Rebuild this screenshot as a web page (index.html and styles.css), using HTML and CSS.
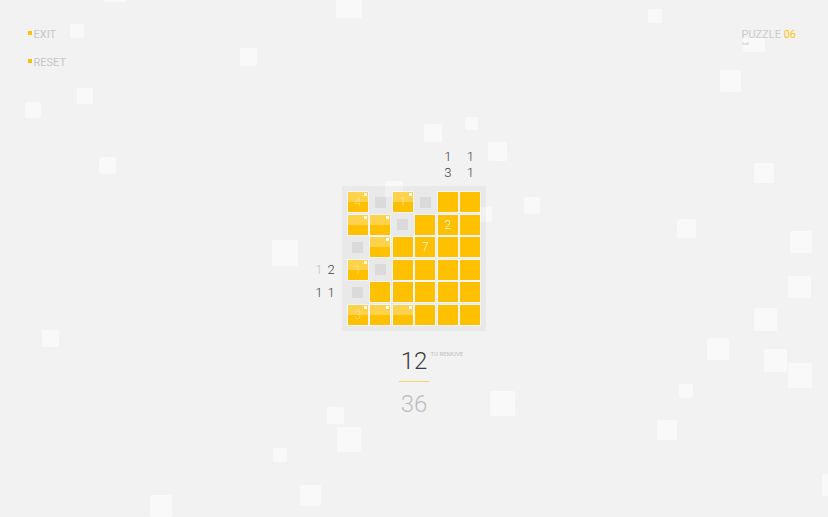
FILE: index.html
```html
<!DOCTYPE html>
<html lang="en">
<head>
<meta charset="utf-8">
<title>Puzzle 06</title>
<link rel="stylesheet" href="styles.css">
</head>
<body>
<div class="bg" aria-hidden="true">
  <i class="sq"></i><i class="sq"></i><i class="sq"></i><i class="sq"></i><i class="sq"></i>
  <i class="sq"></i><i class="sq"></i><i class="sq"></i><i class="sq"></i><i class="sq"></i>
  <i class="sq"></i><i class="sq"></i><i class="sq"></i><i class="sq"></i><i class="sq"></i>
  <i class="sq"></i><i class="sq"></i><i class="sq"></i><i class="sq"></i><i class="sq"></i>
  <i class="sq"></i><i class="sq"></i><i class="sq"></i><i class="sq"></i><i class="sq"></i>
  <i class="sq"></i><i class="sq"></i><i class="sq"></i><i class="sq"></i><i class="sq"></i>
  <i class="sq"></i><i class="sq"></i><i class="sq"></i><i class="sq"></i><i class="sq"></i>
</div>

<header class="top">
  <nav class="menu">
    <a class="item"><span class="mark"></span>EXIT</a>
    <a class="item"><span class="mark"></span>RESET</a>
  </nav>
  <div class="puzzle">
    <div class="title">PUZZLE <span class="num">06</span></div>
    <div class="size">6x6</div>
  </div>
</header>

<main class="game">
  <div class="spacer"></div>
  <div class="cols">
    <div class="col"></div>
    <div class="col"></div>
    <div class="col"></div>
    <div class="col"></div>
    <div class="col"><span>1</span><span>3</span></div>
    <div class="col"><span>1</span><span>1</span></div>
  </div>
  <div class="spacer"></div>

  <div class="rows">
    <div class="row"></div>
    <div class="row"></div>
    <div class="row"></div>
    <div class="row"><span class="done">1</span><span>2</span></div>
    <div class="row"><span>1</span><span>1</span></div>
    <div class="row"></div>
  </div>
  <div class="board">
    <div class="cell flag"><span class="n">4</span></div>
    <div class="cell empty"></div>
    <div class="cell flag"><span class="n">1</span></div>
    <div class="cell empty"></div>
    <div class="cell full"></div>
    <div class="cell full"></div>

    <div class="cell flag"></div>
    <div class="cell flag"></div>
    <div class="cell empty"></div>
    <div class="cell full"></div>
    <div class="cell full"><span class="n">2</span></div>
    <div class="cell full"></div>

    <div class="cell empty"></div>
    <div class="cell flag"></div>
    <div class="cell full"></div>
    <div class="cell full"><span class="n">7</span></div>
    <div class="cell full"></div>
    <div class="cell full"></div>

    <div class="cell flag"><span class="n">1</span></div>
    <div class="cell empty"></div>
    <div class="cell full"></div>
    <div class="cell full"></div>
    <div class="cell full"></div>
    <div class="cell full"></div>

    <div class="cell empty"></div>
    <div class="cell full"></div>
    <div class="cell full"></div>
    <div class="cell full"></div>
    <div class="cell full"></div>
    <div class="cell full"></div>

    <div class="cell flag"><span class="n">3</span></div>
    <div class="cell flag"></div>
    <div class="cell flag"></div>
    <div class="cell full"></div>
    <div class="cell full"></div>
    <div class="cell full"></div>
  </div>
  <div class="spacer"></div>
</main>

<section class="counter">
  <div class="spacer"></div>
  <div class="remain">12</div>
  <div class="label">TO REMOVE</div>
  <div class="line"></div>
  <div class="total">36</div>
</section>
</body>
</html>
```

FILE: styles.css
```css
* { box-sizing: border-box; }

html, body {
  margin: 0;
  padding: 0;
}

body {
  position: relative;
  width: 828px;
  height: 517px;
  overflow: hidden;
  background: #f2f2f2;
  font-family: Roboto, "Liberation Sans", sans-serif;
}

/* decorative background squares */
.bg {
  position: absolute;
  inset: 0;
  z-index: 0;
}
.sq {
  position: absolute;
  display: block;
  background: #f9f9f9;
  border-radius: 2px;
}
.sq:nth-child(1)  { left: 336px; top: -8px;  width: 26px; height: 26px; }
.sq:nth-child(2)  { left: 103px; top: -20px; width: 23px; height: 22px; }
.sq:nth-child(3)  { left: 70px;  top: 24px;  width: 14px; height: 14px; }
.sq:nth-child(4)  { left: 240px; top: 48px;  width: 17px; height: 18px; }
.sq:nth-child(5)  { left: 77px;  top: 88px;  width: 16px; height: 16px; }
.sq:nth-child(6)  { left: 25px;  top: 102px; width: 16px; height: 16px; }
.sq:nth-child(7)  { left: 648px; top: 9px;   width: 14px; height: 14px; }
.sq:nth-child(8)  { left: 743px; top: 38px;  width: 22px; height: 14px; }
.sq:nth-child(9)  { left: 720px; top: 70px;  width: 21px; height: 22px; }
.sq:nth-child(10) { left: 424px; top: 124px; width: 18px; height: 18px; }
.sq:nth-child(11) { left: 465px; top: 117px; width: 13px; height: 13px; }
.sq:nth-child(12) { left: 488px; top: 142px; width: 19px; height: 19px; }
.sq:nth-child(13) { left: 99px;  top: 157px; width: 17px; height: 17px; }
.sq:nth-child(14) { left: 754px; top: 163px; width: 20px; height: 20px; }
.sq:nth-child(15) { left: 524px; top: 197px; width: 16px; height: 17px; }
.sq:nth-child(16) { left: 677px; top: 219px; width: 19px; height: 19px; }
.sq:nth-child(17) { left: 272px; top: 240px; width: 26px; height: 26px; }
.sq:nth-child(18) { left: 790px; top: 231px; width: 22px; height: 22px; }
.sq:nth-child(19) { left: 788px; top: 276px; width: 23px; height: 22px; }
.sq:nth-child(20) { left: 754px; top: 308px; width: 23px; height: 23px; }
.sq:nth-child(21) { left: 42px;  top: 330px; width: 17px; height: 17px; }
.sq:nth-child(22) { left: 707px; top: 338px; width: 22px; height: 22px; }
.sq:nth-child(23) { left: 764px; top: 349px; width: 23px; height: 23px; }
.sq:nth-child(24) { left: 788px; top: 363px; width: 24px; height: 25px; }
.sq:nth-child(25) { left: 679px; top: 384px; width: 14px; height: 14px; }
.sq:nth-child(26) { left: 490px; top: 391px; width: 25px; height: 25px; }
.sq:nth-child(27) { left: 327px; top: 407px; width: 17px; height: 17px; }
.sq:nth-child(28) { left: 337px; top: 427px; width: 24px; height: 25px; }
.sq:nth-child(29) { left: 657px; top: 420px; width: 20px; height: 20px; }
.sq:nth-child(30) { left: 273px; top: 448px; width: 14px; height: 14px; }
.sq:nth-child(31) { left: 300px; top: 485px; width: 21px; height: 21px; }
.sq:nth-child(32) { left: 150px; top: 495px; width: 22px; height: 22px; }
.sq:nth-child(33) { left: 822px; top: 474px; width: 14px; height: 22px; }
.sq:nth-child(34) { left: 385px; top: 181px; width: 18px; height: 16px; }
.sq:nth-child(35) { left: 479px; top: 207px; width: 13px; height: 15px; }

/* header */
.top {
  position: relative;
  z-index: 1;
  display: flex;
  justify-content: space-between;
  align-items: flex-start;
  padding: 27.5px 32px 0 28px;
  height: 70px;
}
.menu {
  display: flex;
  flex-direction: column;
  gap: 14.5px;
}
.item {
  display: flex;
  align-items: flex-start;
  font-size: 11px;
  line-height: 14px;
  color: #c6c6c6;
}
.mark {
  width: 4px;
  height: 4px;
  margin-top: 3px;
  margin-right: 1.5px;
  background: #ffc000;
}
.puzzle {
  display: flex;
  flex-direction: column;
}
.title {
  font-size: 11px;
  line-height: 14px;
  color: #cbcbcb;
}
.num {
  color: #ffc31a;
}
.size {
  font-size: 4px;
  line-height: 4px;
  color: #c4c4c4;
  margin-left: 1px;
}

/* game */
.game {
  position: relative;
  z-index: 1;
  display: grid;
  grid-template-columns: 1fr 144.5px 1fr;
  row-gap: 5.5px;
  margin-top: 78.5px;
}
.cols {
  display: grid;
  grid-template-columns: repeat(6, 20px);
  column-gap: 2.5px;
  padding: 0 6px;
  align-items: end;
}
.col {
  display: flex;
  flex-direction: column;
  align-items: center;
  font-weight: 300;
  font-size: 13px;
  line-height: 16px;
  color: #3f3f3f;
}
.rows {
  display: flex;
  flex-direction: column;
  align-items: flex-end;
  gap: 2.5px;
  padding: 6px 7px 6px 0;
}
.row {
  height: 20px;
  display: flex;
  align-items: center;
  gap: 5px;
  font-weight: 300;
  font-size: 13px;
  color: #3f3f3f;
}
.row .done {
  color: #c2c2c2;
}

.board {
  display: grid;
  grid-template-columns: repeat(6, 20px);
  grid-auto-rows: 20px;
  gap: 2.5px;
  padding: 6px;
  background: rgba(0, 0, 0, 0.035);
}
.cell {
  position: relative;
  display: flex;
  align-items: center;
  justify-content: center;
  font-weight: 300;
  font-size: 12px;
}
.full {
  background: #ffc000;
  box-shadow: 0 0 0 1px rgba(255, 255, 255, 0.5);
}
.flag {
  background: linear-gradient(#ffd24c 0 50%, #ffc000 50% 100%);
  box-shadow: 0 0 0 1px rgba(255, 255, 255, 0.5);
}
.flag::after {
  content: "";
  position: absolute;
  top: 1px;
  right: 1px;
  width: 3px;
  height: 3px;
  background: #ffffff;
}
.empty::before {
  content: "";
  width: 11px;
  height: 11px;
  background: #dadada;
}
.flag .n {
  color: rgba(255, 255, 255, 0.45);
}
.full .n {
  color: rgba(255, 255, 255, 0.85);
}

/* counter */
.counter {
  position: relative;
  z-index: 1;
  display: grid;
  grid-template-columns: 1fr auto 1fr;
  margin-top: 16.5px;
}
.remain {
  grid-column: 2;
  grid-row: 1;
  font-weight: 300;
  font-size: 24px;
  line-height: 28px;
  color: #3b3b3b;
  text-align: center;
}
.label {
  grid-column: 3;
  grid-row: 1;
  font-size: 6px;
  line-height: 6px;
  padding: 4px 0 0 1.5px;
  color: #c0c0c0;
}
.line {
  grid-column: 2;
  grid-row: 2;
  width: 30px;
  height: 1px;
  margin: 6px auto 0;
  background: #fcd35c;
}
.total {
  grid-column: 2;
  grid-row: 3;
  margin-top: 8px;
  font-weight: 300;
  font-size: 24px;
  line-height: 28px;
  color: #bdbdbd;
  text-align: center;
}
```
